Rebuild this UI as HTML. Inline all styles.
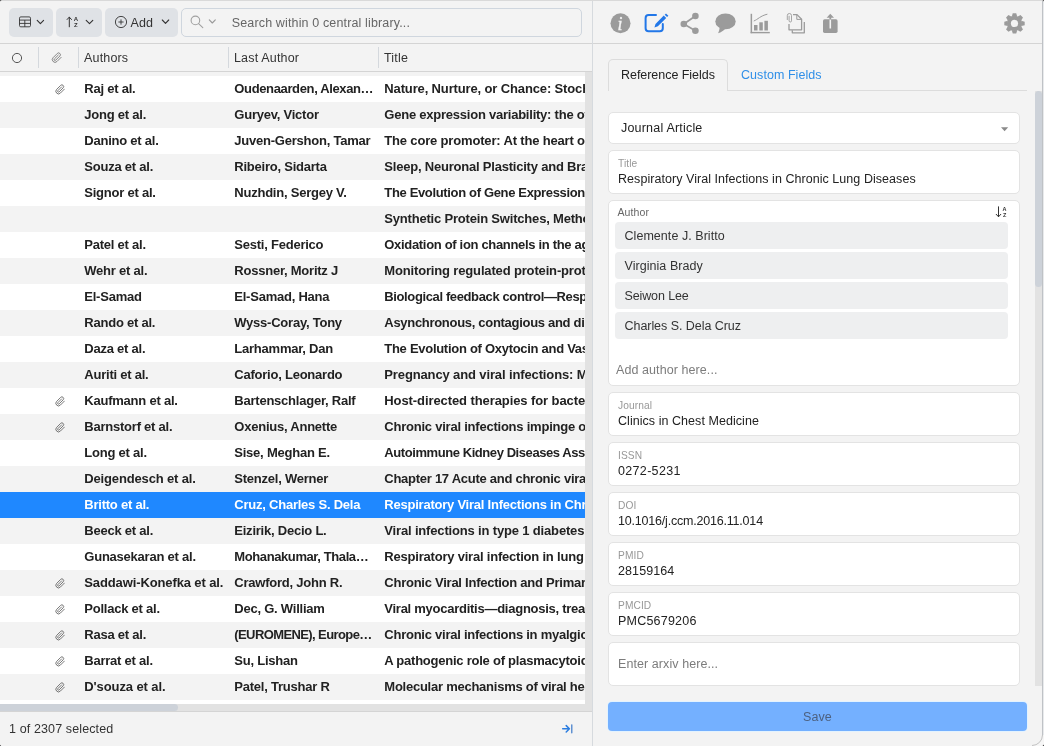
<!DOCTYPE html>
<html lang="en">
<head>
<meta charset="utf-8">
<title>Library</title>
<style>
*{box-sizing:border-box;margin:0;padding:0}
html,body{width:1044px;height:746px;overflow:hidden;background:#f3f3f3}
body{font-family:"Liberation Sans",sans-serif;font-size:12.5px;color:#222;position:relative}
.abs{position:absolute}
#app{position:absolute;left:0;top:0;width:1044px;height:746px;overflow:hidden;will-change:transform;background:#f3f3f3}
#topline{left:0;top:0;width:1044px;height:1px;background:#d9d9d9}
#left{left:0;top:1px;width:592px;height:745px;background:#f3f3f3;overflow:hidden}
#divider{left:592px;top:1px;width:1px;height:745px;background:#d6dade}
#right{left:593px;top:1px;width:451px;height:745px;background:#f3f3f3;overflow:hidden}
/* toolbar */
.tbtn{position:absolute;top:8px;height:29px;background:#dfe2e6;border-radius:5px}
#tbborder{left:0;top:43px;width:592px;height:1px;background:#d4d4d4}
#search{left:181px;top:8px;width:401px;height:29px;border:1px solid #cfd6de;border-radius:5px;background:#f3f3f3}
#search .ph{position:absolute;left:49.800px;top:6.500px;font-size:12.5px;color:#666;letter-spacing:.14px;white-space:nowrap}
/* header */
#hdr{left:0;top:44px;width:592px;height:27px;background:#f3f3f3}
#hdrborder{left:0;top:71px;width:592px;height:1px;background:#d4d4d4}
.hsep{position:absolute;top:47px;width:1px;height:21px;background:#d4d8dd}
.hlabel{position:absolute;top:51px;font-size:12.5px;color:#333;letter-spacing:.17px;white-space:nowrap}
/* rows */
#list{left:0;top:72px;width:585px;height:632px;background:#f3f3f3;overflow:hidden}
.row{position:absolute;left:0;width:585px;height:26px;background:#fff;font-weight:bold;font-size:13px;line-height:26px;white-space:nowrap;overflow:hidden;color:#222;margin-top:-72px}
.row.alt{background:#f3f3f3}
.row.sel{background:#1f88ff;color:#fff}
.row span{position:absolute;top:0;overflow:hidden;letter-spacing:-.23px}
.c1{left:84.3px;width:146px}
.c2{left:234.3px;width:146px}
.c3{left:384.3px;width:300px}
.clip{position:absolute;left:54.5px;top:7.5px;width:10.5px;height:11px}
#vtrack{left:585px;top:72px;width:7px;height:632px;background:#e2e2e2}
#htrack{left:0;top:704px;width:592px;height:7px;background:#e2e2e2}
#hthumb{left:0;top:704px;width:178px;height:7px;background:#cdd2d9;border-radius:0 4px 4px 0}
#status{left:0;top:711px;width:592px;height:35px;background:#f3f3f3;border-top:1px solid #d4d4d4}
#status .t{position:absolute;left:9px;top:10px;font-size:12.5px;color:#333;letter-spacing:.12px}
/* right */
.field{position:absolute;left:608px;width:412px;background:#fff;border:1px solid #e3e3e3;border-radius:5px}
.field .lb{position:absolute;left:9px;top:6.500px;font-size:10.200px;color:#989898;letter-spacing:.1px}
.field .val{position:absolute;left:9px;top:21px;font-size:12.5px;color:#222;letter-spacing:.05px;white-space:nowrap}
.field .ph{position:absolute;left:9px;top:14px;font-size:12.5px;color:#7c7c7c;letter-spacing:.08px}
.chip{position:absolute;left:6px;width:393px;height:26.6px;background:#eeeff0;border-radius:4px;font-size:12.5px;line-height:29.5px;padding-left:9.5px;color:#333;letter-spacing:.05px}
#save{left:608px;top:702.4px;width:419px;height:28.4px;background:#74b0ff;border-radius:4px;box-shadow:0 0 0 1px #e3f3ff;text-align:center;line-height:30.5px;font-size:12.5px;color:#4d6180;letter-spacing:.08px}
</style>
</head>
<body>
<div id="app">
<svg width="0" height="0" style="position:absolute">
<defs>
<path id="pc" d="M21.44 11.05l-9.19 9.19a6 6 0 0 1-8.49-8.49l9.19-9.19a4 4 0 0 1 5.66 5.66l-9.2 9.19a2 2 0 0 1-2.83-2.83l8.49-8.48" fill="none" stroke="#555" stroke-width="1.8" stroke-linecap="round" stroke-linejoin="round"/>
</defs>
</svg>
<div id="topline" class="abs"></div>
<div id="left" class="abs"></div>
<div id="divider" class="abs"></div>
<div id="right" class="abs"></div>

<!-- toolbar -->
<div class="tbtn" style="left:9px;width:44px"></div>
<div class="tbtn" style="left:56px;width:46px"></div>
<div class="tbtn" style="left:105px;width:73px"><span style="position:absolute;left:25.500px;top:7.700px;font-size:12.5px;color:#333;letter-spacing:.08px">Add</span></div>
<div id="search" class="abs"><span class="ph">Search within 0 central library...</span></div>
<div id="tbborder" class="abs"></div>

<!-- header -->
<div id="hdr" class="abs"></div>
<div class="hsep" style="left:38px"></div>
<div class="hsep" style="left:78px"></div>
<div class="hsep" style="left:228px"></div>
<div class="hsep" style="left:378px"></div>
<div class="hlabel" style="left:84px">Authors</div>
<div class="hlabel" style="left:234px">Last Author</div>
<div class="hlabel" style="left:384px">Title</div>
<div id="hdrborder" class="abs"></div>

<!-- list -->
<div id="list" class="abs">
<div class="row" style="top:76px"><svg class="clip" viewBox="0 0 24 24"><use href="#pc"/></svg><span class="c1">Raj et al.</span><span class="c2" style="letter-spacing:-0.36px">Oudenaarden, Alexan…</span><span class="c3" style="letter-spacing:-0.137px">Nature, Nurture, or Chance: Stochastic Gene Expression and Its Consequences</span></div>
<div class="row alt" style="top:102px"><span class="c1">Jong et al.</span><span class="c2">Guryev, Victor</span><span class="c3" style="letter-spacing:-0.232px">Gene expression variability: the other dimension in transcriptome analysis</span></div>
<div class="row" style="top:128px"><span class="c1">Danino et al.</span><span class="c2">Juven-Gershon, Tamar</span><span class="c3" style="letter-spacing:-0.167px">The core promoter: At the heart of gene expression</span></div>
<div class="row alt" style="top:154px"><span class="c1">Souza et al.</span><span class="c2">Ribeiro, Sidarta</span><span class="c3" style="letter-spacing:-0.211px">Sleep, Neuronal Plasticity and Brain Function</span></div>
<div class="row" style="top:180px"><span class="c1">Signor et al.</span><span class="c2">Nuzhdin, Sergey V.</span><span class="c3" style="letter-spacing:-0.343px">The Evolution of Gene Expression in cis and trans</span></div>
<div class="row alt" style="top:206px"><span class="c1"></span><span class="c2"></span><span class="c3" style="letter-spacing:-0.192px">Synthetic Protein Switches, Methods and Protocols</span></div>
<div class="row" style="top:232px"><span class="c1">Patel et al.</span><span class="c2">Sesti, Federico</span><span class="c3" style="letter-spacing:-0.319px">Oxidation of ion channels in the aging process</span></div>
<div class="row alt" style="top:258px"><span class="c1">Wehr et al.</span><span class="c2">Rossner, Moritz J</span><span class="c3" style="letter-spacing:-0.155px">Monitoring regulated protein-protein interactions using split TEV</span></div>
<div class="row" style="top:284px"><span class="c1">El-Samad</span><span class="c2">El-Samad, Hana</span><span class="c3" style="letter-spacing:-0.376px">Biological feedback control—Respect the loops</span></div>
<div class="row alt" style="top:310px"><span class="c1">Rando et al.</span><span class="c2">Wyss-Coray, Tony</span><span class="c3" style="letter-spacing:-0.298px">Asynchronous, contagious and digital aging</span></div>
<div class="row" style="top:336px"><span class="c1">Daza et al.</span><span class="c2">Larhammar, Dan</span><span class="c3" style="letter-spacing:-0.283px">The Evolution of Oxytocin and Vasotocin Receptor Genes</span></div>
<div class="row alt" style="top:362px"><span class="c1">Auriti et al.</span><span class="c2">Caforio, Leonardo</span><span class="c3" style="letter-spacing:-0.127px">Pregnancy and viral infections: Mechanisms of fetal damage</span></div>
<div class="row" style="top:388px"><svg class="clip" viewBox="0 0 24 24"><use href="#pc"/></svg><span class="c1">Kaufmann et al.</span><span class="c2">Bartenschlager, Ralf</span><span class="c3" style="letter-spacing:-0.09px">Host-directed therapies for bacterial and viral infections</span></div>
<div class="row alt" style="top:414px"><svg class="clip" viewBox="0 0 24 24"><use href="#pc"/></svg><span class="c1">Barnstorf et al.</span><span class="c2">Oxenius, Annette</span><span class="c3" style="letter-spacing:-0.227px">Chronic viral infections impinge on naive bystander CD8 T cells</span></div>
<div class="row" style="top:440px"><span class="c1">Long et al.</span><span class="c2">Sise, Meghan E.</span><span class="c3" style="letter-spacing:-0.425px">Autoimmune Kidney Diseases Associated with Chronic Viral Infections</span></div>
<div class="row alt" style="top:466px"><span class="c1" style="letter-spacing:-0.15px">Deigendesch et al.</span><span class="c2">Stenzel, Werner</span><span class="c3" style="letter-spacing:-0.266px">Chapter 17 Acute and chronic viral infections</span></div>
<div class="row sel" style="top:492px"><span class="c1">Britto et al.</span><span class="c2">Cruz, Charles S. Dela</span><span class="c3" style="letter-spacing:-0.229px">Respiratory Viral Infections in Chronic Lung Diseases</span></div>
<div class="row alt" style="top:518px"><span class="c1">Beeck et al.</span><span class="c2">Eizirik, Decio L.</span><span class="c3" style="letter-spacing:-0.163px">Viral infections in type 1 diabetes mellitus — why the β cells?</span></div>
<div class="row" style="top:544px"><span class="c1">Gunasekaran et al.</span><span class="c2" style="letter-spacing:-0.4px">Mohanakumar, Thala…</span><span class="c3" style="letter-spacing:-0.208px">Respiratory viral infection in lung transplantation</span></div>
<div class="row alt" style="top:570px"><svg class="clip" viewBox="0 0 24 24"><use href="#pc"/></svg><span class="c1" style="letter-spacing:-0.12px">Saddawi-Konefka et al.</span><span class="c2">Crawford, John R.</span><span class="c3" style="letter-spacing:-0.25px">Chronic Viral Infection and Primary Central Nervous System Malignancy</span></div>
<div class="row" style="top:596px"><svg class="clip" viewBox="0 0 24 24"><use href="#pc"/></svg><span class="c1">Pollack et al.</span><span class="c2">Dec, G. William</span><span class="c3" style="letter-spacing:-0.258px">Viral myocarditis—diagnosis, treatment options, and current controversies</span></div>
<div class="row alt" style="top:622px"><svg class="clip" viewBox="0 0 24 24"><use href="#pc"/></svg><span class="c1">Rasa et al.</span><span class="c2" style="letter-spacing:-0.6px">(EUROMENE), Europe…</span><span class="c3" style="letter-spacing:-0.245px">Chronic viral infections in myalgic encephalomyelitis/chronic fatigue syndrome</span></div>
<div class="row" style="top:648px"><svg class="clip" viewBox="0 0 24 24"><use href="#pc"/></svg><span class="c1">Barrat et al.</span><span class="c2">Su, Lishan</span><span class="c3" style="letter-spacing:-0.237px">A pathogenic role of plasmacytoid dendritic cells in autoimmunity and chronic viral infection</span></div>
<div class="row alt" style="top:674px"><svg class="clip" viewBox="0 0 24 24"><use href="#pc"/></svg><span class="c1" style="letter-spacing:-0.1px">D'souza et al.</span><span class="c2">Patel, Trushar R</span><span class="c3" style="letter-spacing:-0.245px">Molecular mechanisms of viral hepatitis induced hepatocellular carcinoma</span></div>
<div class="row" style="top:700px"></div></div>
<div id="vtrack" class="abs"></div>
<div id="htrack" class="abs"></div>
<div id="hthumb" class="abs"></div>
<div id="status" class="abs"><span class="t">1 of 2307 selected</span></div>

<!-- right panel -->
<div class="abs" style="left:593px;top:43px;width:451px;height:1px;background:#d4d4d4"></div>
<div class="abs" style="left:608px;top:90px;width:419px;height:1px;background:#dcdcdc"></div>
<div class="abs" style="left:608px;top:59px;width:120px;height:32px;background:#f3f3f3;border:1px solid #dcdcdc;border-bottom:none;border-radius:5px 5px 0 0"><span style="position:absolute;left:12px;top:8px;font-size:12.5px;color:#222;letter-spacing:-.04px;white-space:nowrap">Reference Fields</span></div>
<div class="abs" style="left:741px;top:68px;font-size:12.5px;color:#2f8fe8;letter-spacing:.05px">Custom Fields</div>

<div class="field" style="top:112px;height:32px"><span class="val" style="left:12px;top:8px;letter-spacing:.2px">Journal Article</span></div>
<div class="field" style="top:150px;height:44px"><span class="lb">Title</span><span class="val">Respiratory Viral Infections in Chronic Lung Diseases</span></div>
<div class="field" style="top:200px;height:186px"><span class="lb" style="left:8.500px;top:5.400px;color:#666;font-size:10.500px">Author</span>
<div class="chip" style="top:21px">Clemente J. Britto</div>
<div class="chip" style="top:51px">Virginia Brady</div>
<div class="chip" style="top:81px;letter-spacing:-.12px">Seiwon Lee</div>
<div class="chip" style="top:111px;letter-spacing:-.05px">Charles S. Dela Cruz</div>
<span class="ph" style="left:7px;top:162px">Add author here...</span>
</div>
<div class="field" style="top:392px;height:44px"><span class="lb">Journal</span><span class="val">Clinics in Chest Medicine</span></div>
<div class="field" style="top:442px;height:44px"><span class="lb">ISSN</span><span class="val" style="letter-spacing:.33px">0272-5231</span></div>
<div class="field" style="top:492px;height:44px"><span class="lb">DOI</span><span class="val" style="letter-spacing:-.2px">10.1016/j.ccm.2016.11.014</span></div>
<div class="field" style="top:542px;height:44px"><span class="lb">PMID</span><span class="val" style="letter-spacing:.1px">28159164</span></div>
<div class="field" style="top:592px;height:44px"><span class="lb">PMCID</span><span class="val" style="letter-spacing:.22px">PMC5679206</span></div>
<div class="field" style="top:642px;height:44px"><span class="ph">Enter arxiv here...</span></div>
<div id="save" class="abs">Save</div>

<div class="abs" style="left:1035px;top:91px;width:7px;height:595px;background:#e2e2e2"></div>
<div class="abs" style="left:1035px;top:91px;width:7px;height:196px;background:#cdd2d9;border-radius:4px"></div>
<div class="abs" style="left:1042px;top:1px;width:1px;height:734px;background:#bfc2c6"></div>
<div class="abs" style="left:1043px;top:1px;width:1px;height:734px;background:#e8eaec"></div>
<!-- icon overlay in page coordinates -->
<svg class="abs" style="left:0;top:0;pointer-events:none" width="1044" height="746" viewBox="0 0 1044 746">
<!-- table icon -->
<g fill="none" stroke="#333" stroke-width="0.900">
<rect x="19.500" y="16.900" width="11" height="9.900" rx="1.300"/>
<path d="M19.500 20.100h11M19.500 23.400h11M24.800 20.100v6.700"/>
</g>
<!-- chevrons -->
<g fill="none" stroke="#333" stroke-width="1.100" stroke-linecap="round" stroke-linejoin="round">
<path d="M37.200 20.300l3.200 3.400 3.200-3.400"/>
<path d="M86.2 20.3l3.3 3.4 3.3-3.4"/>
<path d="M162.3 20l3.2 3.4 3.2-3.4"/>
</g>
<path d="M209.3 19.8l3 3.2 3-3.2" fill="none" stroke="#999" stroke-width="1.1" stroke-linecap="round" stroke-linejoin="round"/>
<!-- sort icon up arrow + AZ -->
<g fill="none" stroke="#333" stroke-width="1" stroke-linecap="round" stroke-linejoin="round">
<path d="M69.300 26.800V17.200M67.100 19.500l2.200-2.400 2.200 2.400"/>
</g>
<text x="73.7" y="21.2" font-family="Liberation Sans, sans-serif" font-size="6" font-weight="bold" fill="#333">A</text>
<text x="74" y="27" font-family="Liberation Sans, sans-serif" font-size="6" font-weight="bold" fill="#333">Z</text>
<!-- plus circle -->
<g fill="none" stroke="#333" stroke-width="0.900">
<circle cx="121" cy="22" r="5.600"/>
<path d="M118.800 22h4.400M121 19.800v4.400" stroke-linecap="round"/>
</g>
<!-- search icon -->
<g fill="none" stroke="#a0a0a0" stroke-width="1.1" stroke-linecap="round">
<circle cx="195.4" cy="20.4" r="4.3"/>
<path d="M198.6 23.7l4.2 4"/>
</g>
<!-- header circle -->
<circle cx="17" cy="58" r="4.6" fill="none" stroke="#444" stroke-width="0.9"/>
<!-- header paperclip -->
<g transform="translate(51.4,52.3) scale(0.455)" fill="none" stroke="#666" stroke-width="1.7" stroke-linecap="round" stroke-linejoin="round"><path d="M21.44 11.05l-9.19 9.19a6 6 0 0 1-8.49-8.49l9.19-9.19a4 4 0 0 1 5.66 5.66l-9.2 9.19a2 2 0 0 1-2.83-2.83l8.49-8.48"/></g>

<!-- right toolbar -->
<!-- info -->
<circle cx="620.5" cy="23.3" r="10" fill="#9b9b9b"/>
<text x="617.600" y="29.500" font-family="Liberation Serif, serif" font-style="italic" font-size="18" fill="#f3f3f3" stroke="#f3f3f3" stroke-width="0.350">i</text>
<!-- edit -->
<g fill="none" stroke="#2277e8" stroke-linecap="round" stroke-linejoin="round">
<path d="M656 15.1h-7.4a3 3 0 0 0-3 3v10.1a3 3 0 0 0 3 3h11.2a3 3 0 0 0 3-3V24" stroke-width="2"/>
<path d="M654.400 27.400l1.100-3.500 8.300-8.300 2.400 2.400-8.300 8.300z" fill="#2277e8" stroke="none"/>
<path d="M664.700 14.700l1.300-1.300 2.400 2.400-1.300 1.300z" fill="#2277e8" stroke="none"/>
</g>
<!-- share -->
<g fill="#9b9b9b" stroke="#9b9b9b">
<circle cx="683.800" cy="24" r="3.300" stroke="none"/>
<circle cx="695.4" cy="16" r="3.3" stroke="none"/>
<circle cx="695.4" cy="30.8" r="3.3" stroke="none"/>
<path d="M695.400 16l-11.600 8 11.600 6.800" fill="none" stroke-width="1.700"/>
</g>
<!-- comment -->
<g fill="#9b9b9b">
<ellipse cx="725.5" cy="21.4" rx="10.2" ry="7.9"/>
<path d="M719.5 26.5c.3 2.6-.6 4.9-1.4 6.7 3-1 5.600-2.600 7.600-5z"/>
</g>
<!-- chart -->
<g fill="#9b9b9b">
<rect x="750.6" y="13.8" width="1.5" height="19.4"/>
<rect x="750.6" y="31.900" width="19.2" height="1.4"/>
<rect x="754" y="25" width="3.5" height="5.500"/>
<rect x="759.300" y="22.300" width="3.5" height="8.2"/>
<rect x="764.4" y="20.8" width="3.5" height="9.700"/>
<path d="M753.8 21c4-1.500 6.500-5.200 13.600-6.800" fill="none" stroke="#9b9b9b" stroke-width="1"/>
</g>
<!-- files -->
<g fill="none" stroke="#9b9b9b" stroke-width="1.300" stroke-linejoin="round">
<path d="M789 24v5.800h12.600V19.200l-4.600-4.600h-4"/>
<path d="M796.800 14.800v4.600h4.600" stroke-width="1"/>
<path d="M792.300 30.200v2.600h12V22"/>
<path d="M787.300 19.600v-4a2.100 2.100 0 0 1 4.200 0v5.200a1.200 1.200 0 0 1-2.400 0v-4.600" stroke-width="0.9" stroke-linecap="round"/>
</g>
<!-- export -->
<g>
<rect x="823" y="19.300" width="14.600" height="13.600" rx="1.600" fill="#9b9b9b"/>
<path d="M830.300 28.500V19" stroke="#f3f3f3" stroke-width="1.600" fill="none"/>
<path d="M830.300 19.600V15.500" stroke="#9b9b9b" stroke-width="1.800" fill="none"/>
<path d="M826.600 17.800l3.700-4 3.700 4z" fill="#9b9b9b"/>
</g>
<!-- gear -->
<g transform="translate(1014.500,23.400)" fill="#9b9b9b">
<path d="M-2.700 -6.800L-1.750 -10.200H1.750L2.700 -6.800z" transform="rotate(0)"/><path d="M-2.700 -6.800L-1.750 -10.200H1.750L2.700 -6.800z" transform="rotate(45)"/><path d="M-2.700 -6.800L-1.750 -10.200H1.750L2.700 -6.800z" transform="rotate(90)"/><path d="M-2.700 -6.800L-1.750 -10.200H1.750L2.700 -6.800z" transform="rotate(135)"/><path d="M-2.700 -6.800L-1.750 -10.200H1.750L2.700 -6.800z" transform="rotate(180)"/><path d="M-2.700 -6.800L-1.750 -10.200H1.750L2.700 -6.800z" transform="rotate(225)"/><path d="M-2.700 -6.800L-1.750 -10.200H1.750L2.700 -6.800z" transform="rotate(270)"/><path d="M-2.700 -6.800L-1.750 -10.200H1.750L2.700 -6.800z" transform="rotate(315)"/>
<circle r="7.600"/>
<circle r="3.600" fill="#f3f3f3"/>
</g>
<!-- caret -->
<path d="M1001 127.200h7.200l-3.600 4z" fill="#8a8a8a"/>
<!-- author sort icon -->
<g fill="none" stroke="#333" stroke-width="1" stroke-linecap="round" stroke-linejoin="round">
<path d="M998.500 206.800v9.800M996.200 214.300l2.300 2.500 2.300-2.500"/>
</g>
<text x="1002.600" y="211" font-family="Liberation Sans, sans-serif" font-size="5.500" font-weight="bold" fill="#333">A</text>
<text x="1002.900" y="217" font-family="Liberation Sans, sans-serif" font-size="5.500" font-weight="bold" fill="#333">Z</text>
<!-- status arrow -->
<g fill="none" stroke="#2b7de0" stroke-linecap="round" stroke-linejoin="round">
<path d="M562.700 728.800h6.200M566.200 725.600l3.200 3.200-3.200 3.200" stroke-width="1.500"/>
<path d="M571.800 724.800v8" stroke-width="1.200" stroke="#3b78c8"/>
</g>
<!-- window corner -->
<path d="M1042.500 735A10.500 10.500 0 0 1 1032 745.500V746H1044V735z" fill="#f6f6f6"/>
<path d="M1042.500 735A10.500 10.500 0 0 1 1032 745.500" fill="none" stroke="#c2c2c2" stroke-width="1"/>
<path d="M1044 744.500V746h-1.500z" fill="#3a3a3a"/>
<path d="M0 744.800V746h1.200z" fill="#3a3a3a"/>
<path d="M0 0h1.600L0 1.600z" fill="#555"/>
<path d="M1044 0h-1.600L1044 1.600z" fill="#555"/>
</svg>
</div><!--app-->

</body>
</html>
